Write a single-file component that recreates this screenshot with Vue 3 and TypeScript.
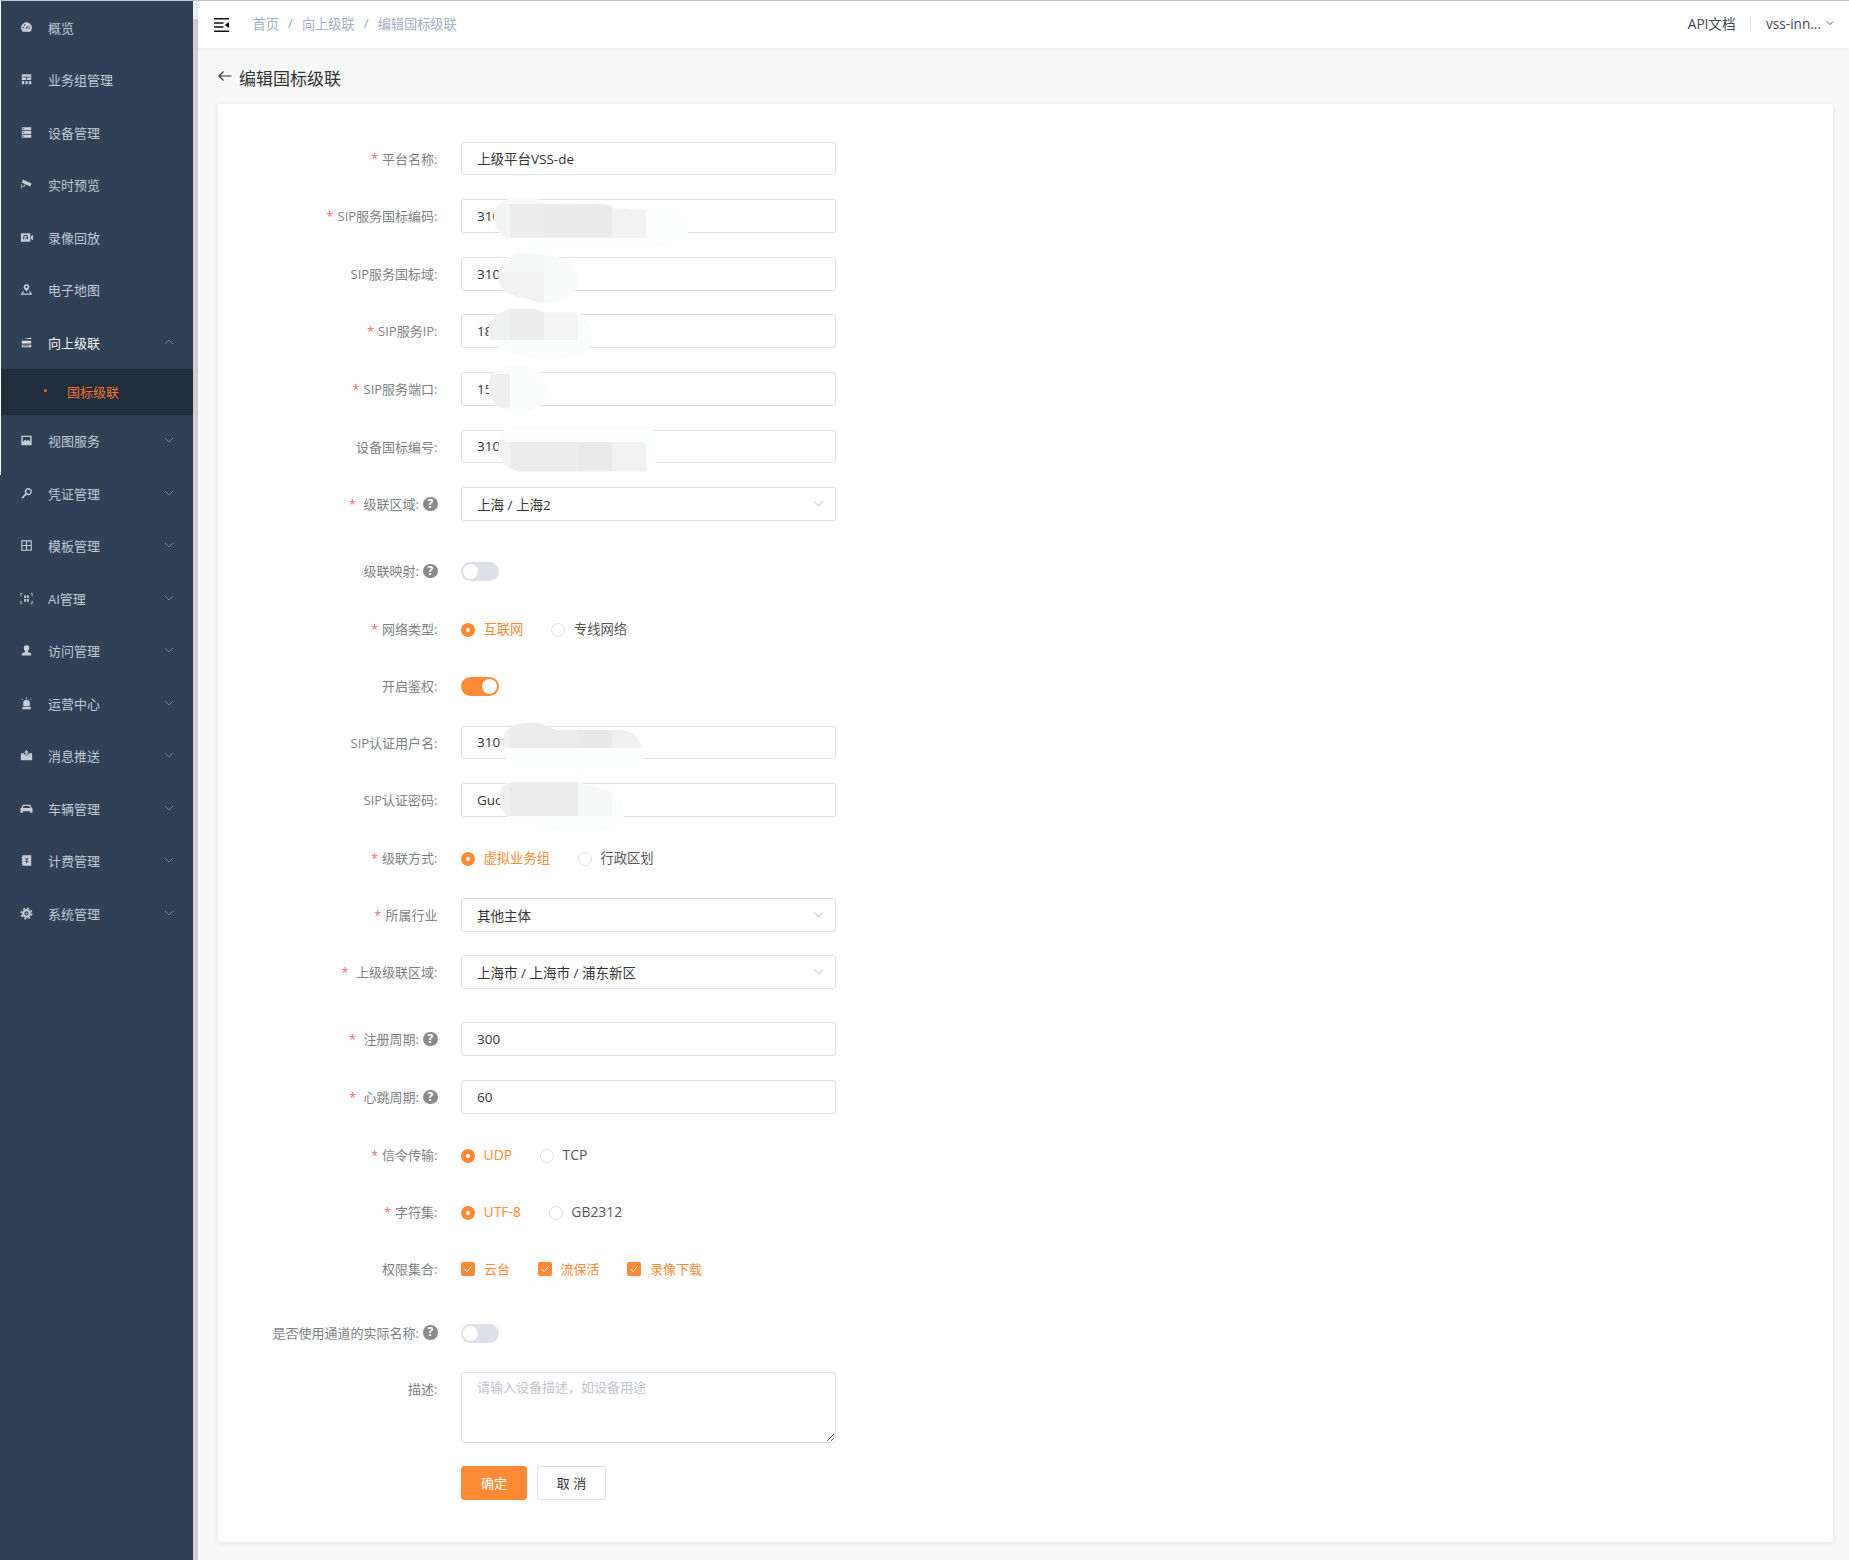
<script setup lang="ts">
import { computed } from 'vue'

interface NavItem { icon: string; label: string; arrow?: 'up' | 'down'; open?: boolean }
const nav: NavItem[] = [
  { icon: 'gauge', label: '概览' },
  { icon: 'org', label: '业务组管理' },
  { icon: 'server', label: '设备管理' },
  { icon: 'camera', label: '实时预览' },
  { icon: 'video', label: '录像回放' },
  { icon: 'map', label: '电子地图' },
  { icon: 'cascade', label: '向上级联', arrow: 'up', open: true },
  { icon: 'image', label: '视图服务', arrow: 'down' },
  { icon: 'key', label: '凭证管理', arrow: 'down' },
  { icon: 'grid', label: '模板管理', arrow: 'down' },
  { icon: 'ai', label: 'AI管理', arrow: 'down' },
  { icon: 'user', label: '访问管理', arrow: 'down' },
  { icon: 'alarm', label: '运营中心', arrow: 'down' },
  { icon: 'inbox', label: '消息推送', arrow: 'down' },
  { icon: 'car', label: '车辆管理', arrow: 'down' },
  { icon: 'bill', label: '计费管理', arrow: 'down' },
  { icon: 'gear', label: '系统管理', arrow: 'down' },
]

interface Row {
  label: string
  req?: boolean
  tip?: boolean
  kind: 'input' | 'select' | 'switch' | 'radio' | 'check' | 'textarea' | 'buttons'
  value?: string
  on?: boolean
  opts?: string[]
  center: number
  height?: number
}
const rawRows: Row[] = [
  { label: '平台名称:', req: true, kind: 'input', value: '上级平台VSS-de', center: 158.5 },
  { label: 'SIP服务国标编码:', req: true, kind: 'input', value: '3101', center: 216 },
  { label: 'SIP服务国标域:', kind: 'input', value: '3101', center: 274 },
  { label: 'SIP服务IP:', req: true, kind: 'input', value: '180', center: 331 },
  { label: 'SIP服务端口:', req: true, kind: 'input', value: '150', center: 389 },
  { label: '设备国标编号:', kind: 'input', value: '3101', center: 446.5 },
  { label: '级联区域:', req: true, tip: true, kind: 'select', value: '上海 / 上海2', center: 504 },
  { label: '级联映射:', tip: true, kind: 'switch', on: false, center: 572 },
  { label: '网络类型:', req: true, kind: 'radio', opts: ['互联网', '专线网络'], center: 629 },
  { label: '开启鉴权:', kind: 'switch', on: true, center: 686.5 },
  { label: 'SIP认证用户名:', kind: 'input', value: '3101', center: 742.5 },
  { label: 'SIP认证密码:', kind: 'input', value: 'Guoo', center: 800 },
  { label: '级联方式:', req: true, kind: 'radio', opts: ['虚拟业务组', '行政区划'], center: 858 },
  { label: '所属行业', req: true, kind: 'select', value: '其他主体', center: 915 },
  { label: '上级级联区域:', req: true, kind: 'select', value: '上海市 / 上海市 / 浦东新区', center: 972 },
  { label: '注册周期:', req: true, tip: true, kind: 'input', value: '300', center: 1039 },
  { label: '心跳周期:', req: true, tip: true, kind: 'input', value: '60', center: 1097 },
  { label: '信令传输:', req: true, kind: 'radio', opts: ['UDP', 'TCP'], center: 1155 },
  { label: '字符集:', req: true, kind: 'radio', opts: ['UTF-8', 'GB2312'], center: 1212 },
  { label: '权限集合:', kind: 'check', opts: ['云台', '流保活', '录像下载'], center: 1269 },
  { label: '是否使用通道的实际名称:', tip: true, kind: 'switch', on: false, center: 1333.5 },
  { label: '描述:', kind: 'textarea', center: 1407.3, height: 70.7 },
  { label: '', kind: 'buttons', center: 1483, height: 34 },
]
const rows = computed(() =>
  rawRows.map((r, i) => {
    const h = r.height ?? 33.5
    const prev = rawRows[i - 1]
    const mt = prev ? r.center - prev.center - (h + (prev.height ?? 33.5)) / 2 : 0
    return { ...r, h, mt }
  }),
)
const isLatin = (s: string): boolean => /^[\x00-\x7f]+$/.test(s)

interface Blob { tx: number; ty: number; d: string; base: string; rects: [number, number, number, number, string][] }
const blobs: Blob[] = [
  {
    tx: 470, ty: 190, base: '#fcfdfd',
    d: 'M72 80C72 40 110 20 170 20C200 20 215 40 240 43L400 42C420 44 430 52 450 55L640 70C660 90 665 130 640 150C600 170 500 182 220 182C190 180 170 165 150 158C100 150 72 120 72 80Z',
    rects: [[72, 20, 150, 22, '#f8f9f9'], [72, 42, 48, 116, '#f3f4f4'], [120, 42, 102, 101, '#ececec'], [222, 42, 204, 101, '#eaeaea'], [426, 55, 102, 88, '#f2f2f2']],
  },
  {
    tx: 470, ty: 190, base: '#f9fafa',
    d: 'M85 255C85 215 120 187 165 187C195 187 205 197 225 197C290 200 325 225 325 265C325 310 290 338 225 338C190 336 170 326 150 322C110 315 85 290 85 255Z',
    rects: [[85, 187, 137, 59, '#f6f7f7'], [85, 246, 137, 100, '#f1f1f1']],
  },
  {
    tx: 470, ty: 190, base: '#fbfcfc',
    d: 'M55 430C55 385 90 355 150 355C190 355 205 360 222 367L320 367C350 385 368 410 368 450C368 490 320 505 222 508C180 505 110 490 80 470C65 460 55 445 55 430Z',
    rects: [[55, 355, 65, 95, '#eff0f0'], [120, 355, 102, 95, '#ececec'], [222, 367, 102, 83, '#f5f5f5']],
  },
  {
    tx: 470, ty: 360, base: '#fbfcfc',
    d: 'M55 80C55 40 80 15 130 15C180 15 222 30 232 85C232 130 190 160 150 160C100 160 55 125 55 80Z',
    rects: [[55, 42, 65, 101, '#eeeeee']],
  },
  {
    tx: 470, ty: 360, base: '#fcfdfd',
    d: 'M85 270C85 240 95 210 115 198L540 197C560 220 568 270 560 305L528 335L150 335C110 330 85 300 85 270Z',
    rects: [[85, 246, 35, 90, '#f3f3f3'], [120, 246, 204, 90, '#ececec'], [324, 246, 102, 90, '#e9e9e9'], [426, 246, 102, 90, '#f1f1f1']],
  },
  {
    tx: 470, ty: 710, base: '#fdfefe',
    d: 'M98 90C100 55 140 37 180 37C220 37 235 55 260 60L450 60C490 60 520 90 520 150C500 180 300 200 200 195C130 185 100 150 98 114Z',
    rects: [[98, 37, 22, 77, '#f0f0f0'], [120, 37, 204, 77, '#ebebeb'], [324, 37, 102, 77, '#e8e8e8'], [426, 37, 102, 77, '#f0f0f0']],
  },
  {
    tx: 470, ty: 710, base: '#fcfdfd',
    d: 'M88 260C88 235 100 217 140 215L320 215C360 230 400 235 426 245C470 270 475 320 440 355C340 380 220 360 130 335C100 310 88 290 88 260Z',
    rects: [[88, 215, 32, 103, '#f0f0f0'], [120, 215, 204, 103, '#ebebeb'], [324, 215, 102, 103, '#f6f7f7']],
  },
]
</script>

<template>
  <div class="app">
    <aside class="side">
      <template v-for="item in nav" :key="item.label">
        <div class="nav" :class="{ active: item.open }">
          <svg class="ico" viewBox="0 0 16 16" fill="currentColor">
            <template v-if="item.icon === 'gauge'">
              <path d="M8 2.500a5.800 5.800 0 0 0-5.800 5.800c0 1.700.7 3.200 1.900 4.200h7.800a5.700 5.700 0 0 0 1.900-4.200A5.800 5.800 0 0 0 8 2.500z" />
              <path d="M7.300 9.300l2.600-3.100" stroke="#304056" stroke-width="1.100" />
              <circle cx="4.700" cy="8" r=".8" fill="#304056" /><circle cx="6" cy="5.400" r=".8" fill="#304056" /><circle cx="11.300" cy="8.400" r=".8" fill="#304056" />
            </template>
            <template v-else-if="item.icon === 'org'">
              <path d="M3 2.500h10v6H3zM3 9.500h2.500V13H3zM6.800 9.500h2.400V13H6.800zM10.500 9.500H13V13h-2.500z" />
              <path d="M8 5v5M4 5.500h8" stroke="#304056" stroke-width=".8" />
            </template>
            <template v-else-if="item.icon === 'server'">
              <path d="M3 2.500h10v3H3zM3 6.500h10v3H3zM3 10.500h10v3H3z" />
              <path d="M4 4h1.500M4 8h1.500M4 12h1.500" stroke="#304056" />
            </template>
            <template v-else-if="item.icon === 'camera'">
              <path d="M4 2.600l9.400 4.200-1.300 3.200L3 5.800z" />
              <path d="M2 7.600v5h1v-2h2.600l1.600-2.400-1.200-.6-1 1.600H3v-1.600z" opacity=".7" />
            </template>
            <template v-else-if="item.icon === 'video'">
              <path d="M2 3.500h10v9H2zM12.600 6.500L15 5.200v5.600l-2.400-1.300z" />
              <path d="M5 10V7.600A1.900 1.900 0 0 1 9 7.600V10M7.800 7.800l-.8 1.400" stroke="#304056" stroke-width="1.100" fill="none" />
            </template>
            <template v-else-if="item.icon === 'map'">
              <path d="M8 2.300A3 3 0 0 0 5 5.400c0 1.900 3 4.800 3 4.800s3-2.900 3-4.800a3 3 0 0 0-3-3.100zm0 4.200a1.200 1.200 0 1 1 0-2.400 1.200 1.200 0 0 1 0 2.400z" />
              <path d="M4.500 9L1.800 13.500h12.400L11.500 9l-.6 1.500 1 1.800H4.100l1-1.800z" />
            </template>
            <template v-else-if="item.icon === 'cascade'">
              <path d="M3 4.400L13 3v1.300H3zM3 6h10v3H3zM3 10.300h10V13H3z" />
              <path d="M4 11.600h7" stroke="#304056" />
            </template>
            <template v-else-if="item.icon === 'image'">
              <path fill-rule="evenodd" d="M2.500 3h11v10h-11zM4 4.300v5.200l2.500-2.400 1.800 1.500 1.700-1.300 2 2V4.300z" />
            </template>
            <template v-else-if="item.icon === 'key'">
              <path fill-rule="evenodd" d="M10 2.200a3.800 3.800 0 0 0-3.300 5.700L2.600 12.300l1.300 1.400L8 9.300A3.800 3.800 0 1 0 10 2.200zm0 1.500a2.300 2.300 0 1 1 0 4.600 2.300 2.300 0 0 1 0-4.600z" />
            </template>
            <template v-else-if="item.icon === 'grid'">
              <path d="M3 3h10v10H3zM8 3v10M3 8h10" fill="none" stroke="currentColor" stroke-width="1.200" />
            </template>
            <template v-else-if="item.icon === 'ai'">
              <path d="M3.500 2.500H2v3M12.500 2.500H14v3M3.500 13.500H2v-3M12.500 13.500H14v-3" fill="none" stroke="currentColor" />
              <path d="M5.500 4.500h2v3h-2zM8.500 4.500h2v3h-2zM5.500 8.500h2v3h-2zM8.500 8.500h2v3h-2z" />
            </template>
            <template v-else-if="item.icon === 'user'">
              <path d="M8 2.500a2.900 2.900 0 0 0-2.900 3c0 1.300.6 2.300 1.400 2.900v1.100L3 11.300v2h10v-2l-3.500-1.800V8.400c.8-.6 1.400-1.600 1.400-2.900a2.900 2.900 0 0 0-2.900-3z" />
            </template>
            <template v-else-if="item.icon === 'alarm'">
              <path d="M4.500 11V7.500a3.500 3.500 0 0 1 7 0V11zM3.500 11.800h9V14h-9z" />
              <path d="M8 1.500v1.600M3 3l1 1M13 3l-1 1" stroke="currentColor" fill="none" />
            </template>
            <template v-else-if="item.icon === 'inbox'">
              <path fill-rule="evenodd" d="M2 5.500h3.500v1.400H7V8.500h2V6.900h1.500V5.500H14V13H2z" />
              <path d="M8 2l2.500 2.700H9V8H7V4.700H5.500z" />
            </template>
            <template v-else-if="item.icon === 'car'">
              <path fill-rule="evenodd" d="M4 4h8l1.400 3.200 1 .6V12.500h-2.600v-1.700H4.200v1.700H1.600V7.800l1-.6zm1 1.300L4.100 7.500h7.800L11 5.300z" />
            </template>
            <template v-else-if="item.icon === 'bill'">
              <path fill-rule="evenodd" d="M3.500 2.500h9.500v11H3.500v-1.700H2.700v-1h.8V8.500h-.8v-1h.8V5.200h-.8v-1h.8zM6 5l1.800 2.800V8.500H6.300v.9h1.500v1.700h.9V9.400h1.500v-.9H8.700v-.7L10.500 5h-1L8.250 7 7 5z" />
            </template>
            <template v-else>
              <circle cx="8" cy="8" r="5.600" fill="none" stroke="currentColor" stroke-width="1.600" stroke-dasharray="2.200 2.200" />
              <path fill-rule="evenodd" d="M8 3.300a4.700 4.700 0 1 0 0 9.400 4.700 4.700 0 0 0 0-9.400zm0 2.400a2.300 2.300 0 1 1 0 4.600 2.300 2.300 0 0 1 0-4.600z" />
              <circle cx="8" cy="8" r="1" />
            </template>
          </svg>
          <span class="nav-text">{{ item.label }}</span>
          <svg v-if="item.arrow" class="nav-arrow" viewBox="0 0 10 6" fill="none" stroke="currentColor">
            <path :d="item.arrow === 'up' ? 'M1 5l4-4 4 4' : 'M1 1l4 4 4-4'" />
          </svg>
        </div>
        <div v-if="item.open" class="sub">
          <i class="sub-dot"></i>
          <span>国标级联</span>
        </div>
      </template>
    </aside>

    <div class="rail"></div>

    <div class="right">
      <header class="top">
        <svg class="burger" viewBox="0 0 15 14" fill="#111">
          <path d="M0 0h15v1.500H0zM0 4.300h9.500v1.500H0zM0 8.200h9.500v1.500H0zM0 12.500h15V14H0zM10.800 7l3.200-2.400v4.800zM14 4.500h1v5h-1z" />
        </svg>
        <nav class="crumbs">
          <span>首页</span><em>/</em><span>向上级联</span><em>/</em><span>编辑国标级联</span>
        </nav>
        <div class="top-right">
          <span>API文档</span>
          <i class="top-div"></i>
          <span class="acct">vss-inn...</span>
          <svg class="acct-arrow" viewBox="0 0 10 6" fill="none" stroke="currentColor" stroke-width="1.100"><path d="M1 1l4 4 4-4" /></svg>
        </div>
      </header>

      <main class="main">
        <div class="title">
          <svg class="back" viewBox="0 0 14 12" fill="none" stroke="#333" stroke-width="1.200"><path d="M13.500 6H1M5.500 1.500L1 6l4.500 4.500" /></svg>
          <span>编辑国标级联</span>
        </div>
        <section class="card">
          <div
            v-for="r in rows"
            :key="r.label + r.center"
            class="row"
            :class="{ 'row-top': r.kind === 'textarea', 'row-sw': r.kind === 'switch' }"
            :style="{ marginTop: r.mt + 'px', minHeight: r.h + 'px' }"
          >
            <label class="lab">
              <b v-if="r.req" class="star" :class="{ wide: r.tip || r.label === '上级级联区域:' }">*</b>
              <span>{{ r.label }}</span>
              <i v-if="r.tip" class="help">?</i>
            </label>
            <div class="ctl">
              <input v-if="r.kind === 'input'" class="inp" readonly :value="r.value" />
              <div v-else-if="r.kind === 'select'" class="inp sel">
                <span>{{ r.value }}</span>
                <svg class="sel-arrow" viewBox="0 0 10 6" fill="none" stroke="currentColor"><path d="M1 1l4 4 4-4" /></svg>
              </div>
              <span v-else-if="r.kind === 'switch'" class="sw" :class="{ on: r.on }"><i></i></span>
              <div v-else-if="r.kind === 'radio'" class="opts">
                <span v-for="(o, i) in r.opts" :key="o" class="radio" :class="{ sel1: i === 0, latin: isLatin(o) }">
                  <i class="dot"></i>{{ o }}
                </span>
              </div>
              <div v-else-if="r.kind === 'check'" class="opts checks">
                <span v-for="o in r.opts" :key="o" class="check">
                  <i class="box"><svg viewBox="0 0 14 14" fill="none" stroke="#fff" stroke-width="1"><path d="M3.500 7l2.500 2.700 4.500-5.200" /></svg></i>{{ o }}
                </span>
              </div>
              <textarea v-else-if="r.kind === 'textarea'" class="ta" readonly placeholder="请输入设备描述，如设备用途"></textarea>
              <div v-else class="btns">
                <button class="btn primary" type="button">确定</button>
                <button class="btn" type="button">取 消</button>
              </div>
            </div>
          </div>
        </section>
      </main>
    </div>

    <i class="edge"></i>

    <svg class="smudges" width="1849" height="1560" viewBox="0 0 1849 1560">
      <defs>
        <clipPath v-for="(b, i) in blobs" :id="'blob' + i" :key="i"><path :d="b.d" /></clipPath>
      </defs>
      <g v-for="(b, i) in blobs" :key="i" :transform="`translate(${b.tx} ${b.ty}) scale(${1 / 3})`">
        <path :d="b.d" :fill="b.base" />
        <g :clip-path="`url(#blob${i})`">
          <rect v-for="(q, k) in b.rects" :key="k" :x="q[0]" :y="q[1]" :width="q[2]" :height="q[3]" :fill="q[4]" />
        </g>
      </g>
    </svg>
  </div>
</template>

<style scoped>
.app {
  position: relative;
  display: flex;
  height: 1560px;
  overflow: hidden;
  background: #f8f8f9;
  border-top: 1px solid #b6c5d2;
  box-sizing: border-box;
  font-family: "Open Sans", "Noto Sans CJK SC", sans-serif;
  font-size: 13px;
  color: #333;
}
.side {
  flex: none;
  width: 193px;
  box-sizing: border-box;
  background: #304056;
  color: #bfcbd9;
}
.nav {
  display: flex;
  align-items: center;
  height: 52.5px;
  box-sizing: border-box;
  padding: 1.5px 0 0 19px;
  position: relative;
}
.nav.active { color: #f4f4f5; }
.ico { flex: none; width: 15px; height: 15px; color: #c6cdd8; margin-right: 14px; margin-top: -2px; }
.nav.active .ico { color: #dfe3e8; }
.nav-text { line-height: 1; }
.nav-arrow {
  position: absolute;
  left: 164px;
  top: 22.5px;
  width: 10px;
  height: 6px;
  color: #78859a;
}
.sub {
  display: flex;
  align-items: center;
  height: 46px;
  padding-left: 43.5px;
  background: #1f2d3d;
  color: #f4722b;
}
.sub-dot { width: 3px; height: 3px; border-radius: 50%; background: #f4722b; margin-right: 20.5px; margin-top: -2px; }
.rail {
  flex: none;
  width: 5px;
  background: linear-gradient(#efefef 0 18px, #cfcfcf 18px);
}
.right { flex: 1; min-width: 0; display: flex; flex-direction: column; }
.top {
  flex: none;
  display: flex;
  align-items: center;
  height: 47px;
  background: #fff;
  box-shadow: 0 1px 4px rgba(0, 21, 41, 0.08);
  position: relative;
  z-index: 1;
  padding: 0 15px 0 16px;
}
.burger { width: 15px; height: 14px; margin-right: 23.5px; }
.crumbs { display: flex; align-items: center; color: #a3aec0; font-size: 13.2px; margin-top: -3px; }
.crumbs em { font-style: normal; width: 23px; text-align: center; color: #97a8be; }
.top-right { margin-left: auto; display: flex; align-items: center; color: #3f4450; font-size: 13.6px; margin-top: -3px; }
.top-div { width: 1.5px; height: 14px; background: #dfe3e8; margin: 0 15px 0 14px; }
.acct-arrow { width: 8px; height: 6px; margin-left: 5px; color: #444; }
.main { flex: 1; min-height: 0; padding: 0 16px 0 20px; display: flex; flex-direction: column; }
.title {
  flex: none;
  display: flex;
  align-items: center;
  height: 55.7px;
  box-sizing: border-box;
  padding-top: 3.5px;
  font-size: 17px;
  color: #333;
}
.back { width: 14px; height: 12px; margin-right: 7px; margin-top: -3px; }
.card {
  flex: none;
  height: 1438.3px;
  box-sizing: border-box;
  padding-top: 38px;
  background: #fff;
  border-radius: 3px;
  box-shadow: 0 1px 5px rgba(120, 130, 160, 0.18);
}
.row { display: flex; align-items: center; }
.row-top { align-items: flex-start; }
.row-top .lab { padding-top: 7px; }
.row-sw .lab { margin-top: -2px; }
.lab {
  flex: none;
  width: 243px;
  padding-right: 23.5px;
  box-sizing: border-box;
  display: flex;
  align-items: center;
  justify-content: flex-end;
  color: #7d7f85;
  white-space: nowrap;
}
.star { color: #f56c6c; font-weight: 400; margin-right: 4px; }
.star.wide { margin-right: 7.5px; }
.help {
  width: 14.5px;
  height: 14.5px;
  margin-left: 4px;
  border-radius: 50%;
  background: #8a8a8a;
  color: #fff;
  font: 700 12px/14.5px "Open Sans", sans-serif;
  text-align: center;
}
.ctl { flex: none; width: 374.5px; }
.inp {
  display: block;
  width: 100%;
  height: 33.5px;
  box-sizing: border-box;
  padding: 0 15px;
  border: 1px solid #dfdfe8;
  border-radius: 3px;
  background: #fff;
  font: inherit;
  font-size: 13.5px;
  color: #333;
  outline: none;
}
.sel { display: flex; align-items: center; justify-content: space-between; padding-right: 11px; }
.sel-arrow { width: 11px; height: 7px; color: #c8ccd4; }
.sw {
  display: block;
  position: relative;
  width: 38px;
  height: 19px;
  border-radius: 10px;
  background: #dcdfe6;
}
.sw i {
  position: absolute;
  left: 2px;
  top: 2px;
  width: 15px;
  height: 15px;
  border-radius: 50%;
  background: #fff;
}
.sw.on { background: #ff8a33; }
.sw.on i { left: 21px; }
.opts { display: flex; align-items: center; gap: 28px; }
.radio { display: inline-flex; align-items: center; color: #555; font-size: 13.3px; }
.radio.latin { font-size: 13.9px; }
.radio.sel1 { color: #ff8a33; }
.dot {
  width: 14px;
  height: 14px;
  box-sizing: border-box;
  margin-right: 8.5px;
  border-radius: 50%;
  border: 1px solid #dcdfe6;
  background: #fff;
  position: relative;
  top: 1px;
}
.sel1 .dot {
  border: 5px solid #ff8a33;
  background: #fff;
}
.checks { gap: 27.5px; }
.check { display: inline-flex; align-items: center; color: #ff8a33; }
.box {
  width: 14px;
  height: 14px;
  margin-right: 9px;
  border-radius: 2px;
  background: #ff8a33;
  display: block;
}
.box svg { display: block; width: 14px; height: 14px; }
.ta {
  display: block;
  width: 100%;
  height: 70.7px;
  box-sizing: border-box;
  padding: 5px 15px;
  border: 1px solid #dfdfe8;
  border-radius: 3px;
  font: inherit;
  line-height: 1.5;
  outline: none;
  color: #333;
}
.ta::placeholder { color: #c0c4cc; opacity: 1; }
.btns { display: flex; gap: 10px; }
.btn {
  height: 34px;
  width: 69px;
  padding: 0;
  box-sizing: border-box;
  border: 1px solid #dfdfe8;
  border-radius: 3px;
  background: #fff;
  font: inherit;
  color: #333;
}
.btn.primary { width: 66px; border-color: #ff8a33; background: #ff8a33; color: #fff; }
.edge {
  position: absolute;
  left: 0;
  top: 0;
  width: 1px;
  height: 474px;
  background: #fff;
}
.smudges { position: absolute; left: 0; top: -1px; pointer-events: none; }
</style>

<style>
html, body { margin: 0; padding: 0; }
</style>
